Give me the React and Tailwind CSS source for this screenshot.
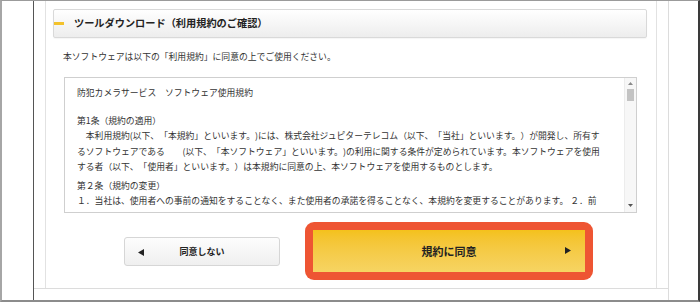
import React from "react";

const jp = { fontFamily: '"Noto Sans CJK JP", "Noto Sans", sans-serif' };

function TriLeft({ className }) {
  return (
    <svg className={className} width="6" height="7" viewBox="0 0 6 7">
      <polygon points="6,0 6,7 0,3.5" fill="#222" />
    </svg>
  );
}
function TriRight({ className }) {
  return (
    <svg className={className} width="6" height="7" viewBox="0 0 6 7">
      <polygon points="0,0 0,7 6,3.5" fill="#222" />
    </svg>
  );
}

export default function App() {
  const lines = [
    "　本利用規約(以下、「本規約」といいます。)には、株式会社ジュピターテレコム（以下、「当社」といいます。）が開発し、所有す",
    "るソフトウェアである　　(以下、「本ソフトウェア」といいます。)の利用に関する条件が定められています。本ソフトウェアを使用",
    "する者（以下、「使用者」といいます。）は本規約に同意の上、本ソフトウェアを使用するものとします。",
  ];
  return (
    <div
      className="w-[700px] h-[302px] bg-white flex overflow-hidden border-t border-t-[#9b9b9b] border-l-2 border-l-[#a6a6a6] border-b-2 border-b-[#8c8c8c] border-r-2 border-r-[#3a3a3a] [text-spacing-trim:space-all]"
      style={jp}
    >
      <div className="w-[31px] shrink-0" />
      <div className="w-px shrink-0 bg-[#555555]" />
      <div className="w-[635px] shrink-0 border-r border-r-[#dcdcdc] flex flex-col">
        <div className="h-[288px] border-b border-b-[#dcdcdc] pl-[11px] flex">
          <div className="w-[612px] h-full border-l border-r border-[#e2e2e2] flex flex-col">
            {/* header */}
            <div className="mt-[8px] ml-[7px] w-[594px] h-[29px] border border-[#d9d9d9] rounded-[2px] bg-linear-to-b from-white to-[#ededed] flex items-center shadow-[0_1px_1px_rgba(0,0,0,0.04)]">
              <div className="w-[10px] h-[3px] bg-[#f3c22c]" />
              <div className="ml-[10px] text-[10.2px] leading-none font-bold text-[#222] whitespace-nowrap">
                ツールダウンロード（利用規約のご確認）
              </div>
            </div>
            {/* intro */}
            <div className="mt-[11px] ml-[17px] text-[8.8px] leading-[16px] text-[#333] whitespace-nowrap">
              本ソフトウェアは以下の「利用規約」に同意の上でご使用ください。
            </div>
            {/* terms */}
            <div className="mt-[12px] ml-[18px] w-[573px] h-[136px] border border-[#cfcfcf] flex">
              <div className="flex-1 overflow-hidden pl-[12px] pt-[7px] text-[8.8px] leading-[15.5px] text-[#333] whitespace-nowrap">
                <div>防犯カメラサービス　ソフトウェア使用規約</div>
                <div className="mt-[12px]">第1条（規約の適用）</div>
                {lines.map((l, i) => (
                  <div key={i}>{l}</div>
                ))}
                <div className="mt-[3px]">第２条（規約の変更）</div>
                <div>１．当社は、使用者への事前の通知をすることなく、また使用者の承諾を得ることなく、本規約を変更することがあります。 ２．前</div>
              </div>
              <div className="w-[12px] shrink-0 bg-[#f7f7f7] border-l border-l-[#ececec] flex flex-col items-center">
                <svg className="mt-[4px]" width="5" height="3" viewBox="0 0 5 3">
                  <polygon points="0,3 5,3 2.5,0" fill="#8a8a8a" />
                </svg>
                <div className="mt-[4px] w-[7px] h-[12px] bg-[#c3c3c3]" />
                <div className="flex-1" />
                <svg className="mb-[5px]" width="5" height="3" viewBox="0 0 5 3">
                  <polygon points="0,0 5,0 2.5,3" fill="#555" />
                </svg>
              </div>
            </div>
            {/* buttons */}
            <div className="mt-[9px] h-[58px] flex items-center">
              <div className="ml-[78px] w-[156px] h-[29px] relative flex items-center justify-center border border-[#d6d6d6] rounded-[3px] bg-linear-to-b from-[#fdfdfd] to-[#efefef]">
                <TriLeft className="absolute left-[13px] top-[11px]" />
                <span className="text-[9px] font-bold text-[#222] leading-none">同意しない</span>
              </div>
              <div className="ml-[25px] w-[288px] h-[58px] rounded-[9px] bg-[#ee5533] p-[8px] flex">
                <div className="flex-1 relative flex items-center justify-center bg-linear-to-b from-[#f4c11b] to-[#f6d462]">
                  <span className="text-[11px] font-bold text-[#222] leading-none">規約に同意</span>
                  <TriRight className="absolute right-[14px] top-[17px]" />
                </div>
              </div>
            </div>
          </div>
        </div>
      </div>
    </div>
  );
}
